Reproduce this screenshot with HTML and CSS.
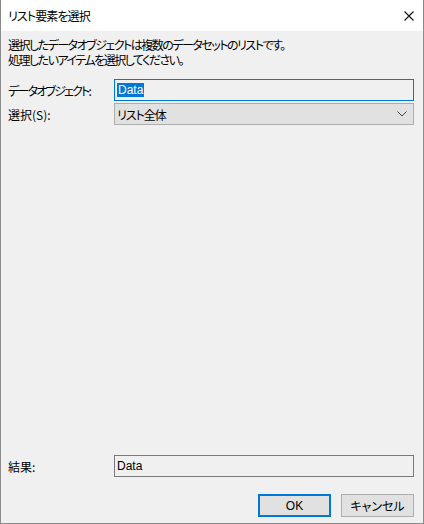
FILE: index.html
```html
<!DOCTYPE html>
<html lang="ja">
<head>
    <meta charset="UTF-8">
    <title>リスト要素を選択</title>
    <link rel="stylesheet" href="styles.css">
</head>
<body>
<div class="window">
    <div class="titlebar">
        <span class="title">リスト要素を選択</span>
        <span class="close">
            <svg width="10" height="10" viewBox="0 0 10 10"><path d="M0.5 0.5 L9.5 9.5 M9.5 0.5 L0.5 9.5" stroke="#111" stroke-width="1.1" fill="none"/></svg>
        </span>
    </div>
    <div class="content">
        <p class="message">選択したデータオブジェクトは複数のデータセットのリストです。<br>処理したいアイテムを選択してください。</p>

        <div class="fields">
            <label class="label narrow">データオブジェクト:</label>
            <div class="textbox focused"><span class="selected">Data</span></div>

            <label class="label">選択(S):</label>
            <div class="combo">
                <span class="combo-text">リスト全体</span>
                <svg class="chevron" width="10" height="6" viewBox="0 0 10 6"><path d="M0.5 0.5 L5 5 L9.5 0.5" stroke="#444" stroke-width="1" fill="none"/></svg>
            </div>
        </div>

        <div class="spacer"></div>

        <div class="fields result">
            <label class="label">結果:</label>
            <div class="textbox">Data</div>
        </div>

        <div class="buttons">
            <button class="button default">OK</button>
            <button class="button">キャンセル</button>
        </div>
    </div>
</div>
</body>
</html>
```

FILE: styles.css
```css
body {
    margin: 0;
    font-family: "Noto Sans CJK JP", "Noto Sans", sans-serif;
    font-size: 12px;
    font-feature-settings: "palt";
    color: #000;
}
.window {
    width: 424px;
    height: 524px;
    box-sizing: border-box;
    border: 1px solid #8a8a8a;
    border-top: none;
    display: flex;
    flex-direction: column;
    background: #f0f0f0;
}
.titlebar {
    height: 31px;
    background: #fff;
    display: flex;
    align-items: center;
    justify-content: space-between;
    padding: 0 9px 0 7px;
    flex-shrink: 0;
}
.title {
    line-height: 15px;
    letter-spacing: -0.9px;
}
.close {
    display: flex;
    width: 10px;
    height: 10px;
}
.content {
    flex: 1;
    display: flex;
    flex-direction: column;
    padding: 6px 8px 6px 7px;
}
.message {
    margin: 0;
    line-height: 15px;
    letter-spacing: -1.5px;
}
.fields {
    display: grid;
    grid-template-columns: 106px 300px;
    row-gap: 2px;
    align-items: center;
    margin-top: 12px;
}
.label {
    line-height: 15px;
}
.label.narrow {
    letter-spacing: -1.8px;
}
.textbox {
    height: 22px;
    box-sizing: border-box;
    border: 1px solid #7a7a7a;
    padding: 0 0 0 2px;
    display: flex;
    align-items: center;
    background: #f0f0f0;
    font-family: "Liberation Sans", "Noto Sans CJK JP", sans-serif;
}
.textbox.focused {
    border-color: #0078d7;
}
.selected {
    background: #0078d7;
    color: #fff;
    line-height: 14px;
    padding: 0 1px;
}
.combo {
    height: 22px;
    box-sizing: border-box;
    border: 1px solid #adadad;
    background: #e1e1e1;
    display: flex;
    align-items: center;
    justify-content: space-between;
    padding: 0 6px 0 2px;
}
.combo-text {
    letter-spacing: -1px;
}
.chevron {
    display: block;
}
.spacer {
    flex: 1;
}
.result {
    margin-top: 0;
}
.buttons {
    display: flex;
    justify-content: flex-end;
    gap: 10px;
    margin-top: 17px;
    padding-right: 1px;
}
.button {
    width: 73px;
    height: 23px;
    box-sizing: border-box;
    border: 1px solid #adadad;
    background: #e1e1e1;
    font: inherit;
    font-family: "Liberation Sans", "Noto Sans CJK JP", sans-serif;
    color: #000;
    padding: 0;
}
.button.default {
    border: 2px solid #0078d7;
}
```
